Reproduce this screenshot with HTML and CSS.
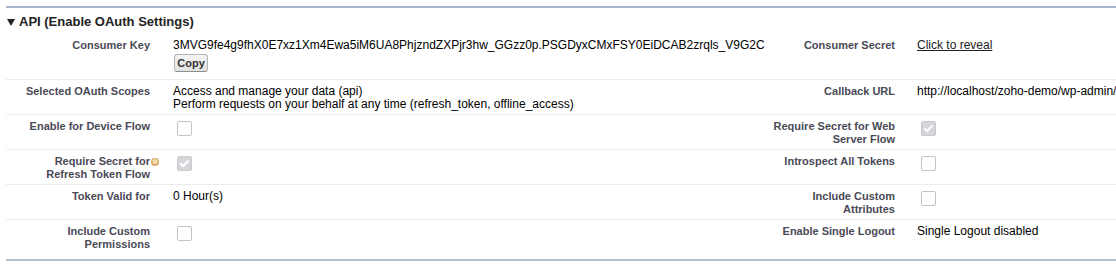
FILE: index.html
```html
<!DOCTYPE html>
<html lang="en">
<head>
  <meta charset="UTF-8" />
  <title>API (Enable OAuth Settings)</title>
  <link rel="stylesheet" href="styles.css">
</head>
<body>

  <div class="section">
    <h3 class="section-title">
      <svg class="twist" width="8" height="7" viewBox="0 0 8 7"><path d="M0 0 H8 L4 7 Z" fill="#222"/></svg>
      API (Enable OAuth Settings)
    </h3>

    <div class="detail-list">
      <div class="row">
        <div class="label">Consumer Key</div>
        <div class="data">
          <div class="key">3MVG9fe4g9fhX0E7xz1Xm4Ewa5iM6UA8PhjzndZXPjr3hw_GGzz0p.PSGDyxCMxFSY0EiDCAB2zrqls_V9G2C</div>
          <button class="btn">Copy</button>
        </div>
        <div class="label">Consumer Secret</div>
        <div class="data"><a class="reveal" href="#">Click to reveal</a></div>
      </div>

      <div class="row">
        <div class="label">Selected OAuth Scopes</div>
        <div class="data">
          Access and manage your data (api)<br>
          Perform requests on your behalf at any time (refresh_token, offline_access)
        </div>
        <div class="label">Callback URL</div>
        <div class="data">http://localhost/zoho-demo/wp-admin/</div>
      </div>

      <div class="row">
        <div class="label">Enable for Device Flow</div>
        <div class="data"><span class="check"></span></div>
        <div class="label">Require Secret for Web Server Flow</div>
        <div class="data"><span class="check checked"></span></div>
      </div>

      <div class="row">
        <div class="label">Require Secret for<span class="help"></span><br>Refresh Token Flow</div>
        <div class="data"><span class="check checked"></span></div>
        <div class="label">Introspect All Tokens</div>
        <div class="data"><span class="check"></span></div>
      </div>

      <div class="row">
        <div class="label">Token Valid for</div>
        <div class="data">0 Hour(s)</div>
        <div class="label">Include Custom Attributes</div>
        <div class="data"><span class="check"></span></div>
      </div>

      <div class="row last">
        <div class="label">Include Custom Permissions</div>
        <div class="data"><span class="check"></span></div>
        <div class="label">Enable Single Logout</div>
        <div class="data">Single Logout disabled</div>
      </div>
    </div>
  </div>

</body>
</html>
```

FILE: styles.css
```css
body {
  font-family: 'Liberation Sans', Arial, sans-serif;
  margin: 0;
  padding: 6px 0 0 6px;
  overflow: hidden;
  background: #fff;
  color: #000;
}

.section {
  width: 1200px;
  border-top: 2px solid #a7b6cd;
  border-bottom: 2px solid #b3c0d6;
  padding-bottom: 5px;
}

.section-title {
  display: flex;
  align-items: center;
  gap: 4px;
  margin: 0;
  padding: 6px 0 4px 1px;
  font-size: 13px;
  line-height: 16px;
  font-weight: bold;
  color: #222;
}

.twist {
  margin-top: 1px;
}

.row {
  display: grid;
  grid-template-columns: 156px 583px 162px 1fr;
  border-bottom: 1px solid #ececec;
}

.row.last {
  border-bottom: none;
}

.label {
  padding: 5px 12px 3px 16px;
  text-align: right;
  font-size: 11px;
  line-height: 13px;
  font-weight: bold;
  color: #4a4a56;
}

.row > .label:nth-child(3) {
  padding-left: 25px;
}

.data {
  padding: 5px 2px 3px 11px;
  font-size: 12px;
  line-height: 13px;
}

.row > .data:last-child {
  padding-left: 10px;
}

.key {
  white-space: nowrap;
}

.btn {
  display: block;
  margin: 2px 0 4px 1px;
  height: 18px;
  width: 34px;
  padding: 0;
  font-family: inherit;
  font-size: 11px;
  font-weight: bold;
  color: #333;
  background: linear-gradient(#f4f4f4, #e2e2e2);
  border: 1px solid #b5b5b5;
  border-bottom-color: #8f8f8f;
  border-radius: 3px;
}

.reveal {
  color: #222;
  text-decoration: underline;
}

.check {
  display: block;
  width: 13px;
  height: 13px;
  margin: 1px 0 0 4px;
  border: 1px solid #c4c4c4;
  border-radius: 2px;
  background: #fff;
  position: relative;
}

.check.checked {
  background: #d6d6da;
  border-color: #cacace;
}

.check.checked::after {
  content: "";
  position: absolute;
  left: 4px;
  top: 1px;
  width: 3px;
  height: 7px;
  border: solid #fff;
  border-width: 0 2px 2px 0;
  transform: rotate(45deg);
}

.help {
  display: inline-block;
  width: 8px;
  height: 8px;
  margin: 0 -9px 0 1px;
  border-radius: 50%;
  background: radial-gradient(circle at 50% 45%, #f3dcae 0 2px, #d6aa62 3px);
  vertical-align: -1px;
}
```
